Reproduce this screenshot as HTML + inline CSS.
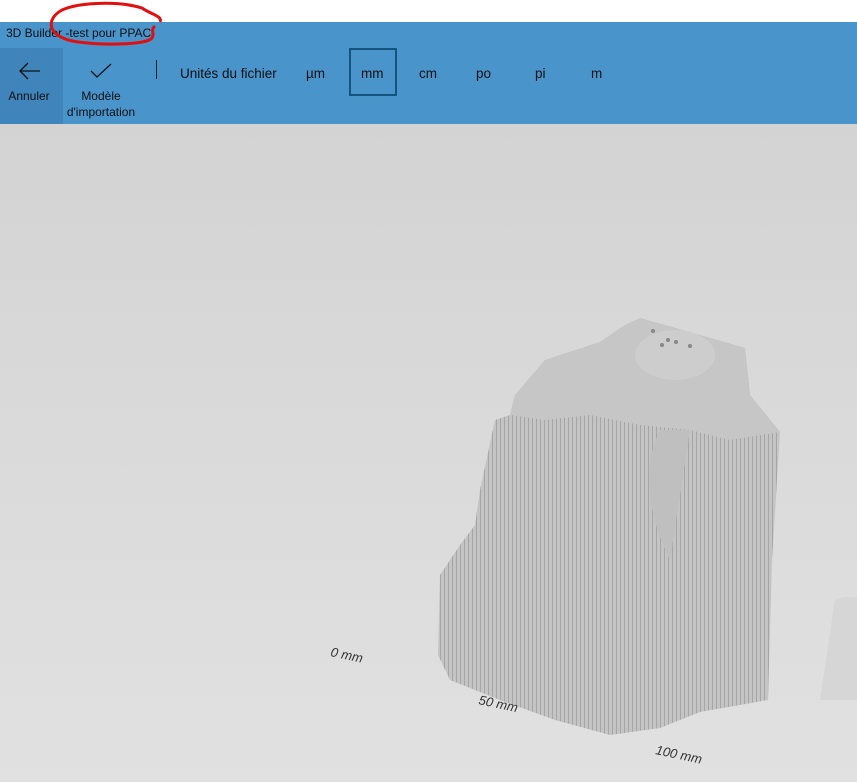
<!DOCTYPE html>
<html><head><meta charset="utf-8"><style>
html,body{margin:0;padding:0;width:857px;height:782px;overflow:hidden;font-family:"Liberation Sans",sans-serif;background:#fff}
.bar{position:absolute;left:0;top:22px;width:857px;height:102px;background:#4a94cc}
.title{position:absolute;left:6px;top:26px;font-size:12px;color:#111}
.ann{position:absolute;left:0;top:48px;width:63px;height:76px;background:#3f84bb}
.lbl{position:absolute;font-size:12px;color:#111;text-align:center;line-height:16px}
.u{position:absolute;top:66px;font-size:13.5px;color:#111}
.sel{position:absolute;left:349px;top:48px;width:48px;height:48px;border:2px solid #14557e;box-sizing:border-box}
.sep{position:absolute;left:156px;top:60px;width:1px;height:19px;background:#222}
.view{position:absolute;left:0;top:124px;width:857px;height:658px;background:linear-gradient(#d3d3d3,#d9d9d9 40%,#e1e1e1)}
</style></head><body>
<div class="bar"></div>
<div class="title">3D Builder -test pour PPAC</div>
<div class="ann"></div>
<svg style="position:absolute;left:18px;top:62px" width="24" height="18"><path d="M22 9H2M10 1L2 9L10 17" stroke="#111" stroke-width="1.3" fill="none"/></svg>
<div class="lbl" style="left:0;width:58px;top:88px">Annuler</div>
<svg style="position:absolute;left:90px;top:63px" width="22" height="16"><path d="M1 8L7 14L21 1" stroke="#111" stroke-width="1.3" fill="none"/></svg>
<div class="lbl" style="left:60px;width:82px;top:88px">Modèle<br>d'importation</div>
<div class="sep"></div>
<div class="u" style="left:180px">Unités du fichier</div>
<div class="u" style="left:306px">µm</div>
<div class="sel"></div>
<div class="u" style="left:361px">mm</div>
<div class="u" style="left:419px">cm</div>
<div class="u" style="left:476px">po</div>
<div class="u" style="left:535px">pi</div>
<div class="u" style="left:591px">m</div>
<svg style="position:absolute;left:0;top:0" width="180" height="60"><path d="M160 22C163 16 150 14 142 8C120 1 80 2 62 10C44 20 48 38 78 42C110 46 148 44 152 38C155 34 150 30 155 26" stroke="#e01010" stroke-width="3" fill="none"/></svg>
<div class="view"></div>
<svg style="position:absolute;left:0;top:124px" width="857" height="658">
<defs><pattern id="st" width="4" height="10" patternUnits="userSpaceOnUse"><rect width="4" height="10" fill="#c4c4c4"/><rect width="1" height="10" fill="#a6a6a6"/></pattern></defs>
<g transform="translate(0,-124)">
<path d="M835 600C845 595 857 598 857 598L857 700L820 700Z" fill="#d6d6d6"/>
<polygon points="440,575 460,545 475,525 480,490 495,420 510,415 515,395 545,360 600,342 625,325 640,318 700,335 745,348 750,395 780,432 772,560 768,700 700,712 660,728 610,735 555,720 500,700 450,680 438,655" fill="url(#st)"/>
<path d="M510,415 515,395 545,360 600,342 625,325 640,318 700,335 745,348 750,395 780,432 730,440 690,430 640,425 590,415 545,420Z" fill="#c6c6c6"/>
<ellipse cx="675" cy="355" rx="40" ry="25" fill="#cdcdcd"/>
<circle cx="653" cy="331" r="2" fill="#888"/><circle cx="668" cy="340" r="2" fill="#888"/><circle cx="676" cy="342" r="2" fill="#888"/><circle cx="690" cy="346" r="2" fill="#888"/><circle cx="662" cy="345" r="2" fill="#888"/>
<path d="M660 430C640 470 650 520 670 560L690 430Z" fill="#bfbfbf"/>
</g>
<g fill="#333" font-size="13" font-style="italic">
<text transform="translate(330,532) rotate(12)">0 mm</text>
<text transform="translate(478,580) rotate(12)">50 mm</text>
<text transform="translate(655,630) rotate(12)">100 mm</text>
</g>
</svg>
</body></html>
